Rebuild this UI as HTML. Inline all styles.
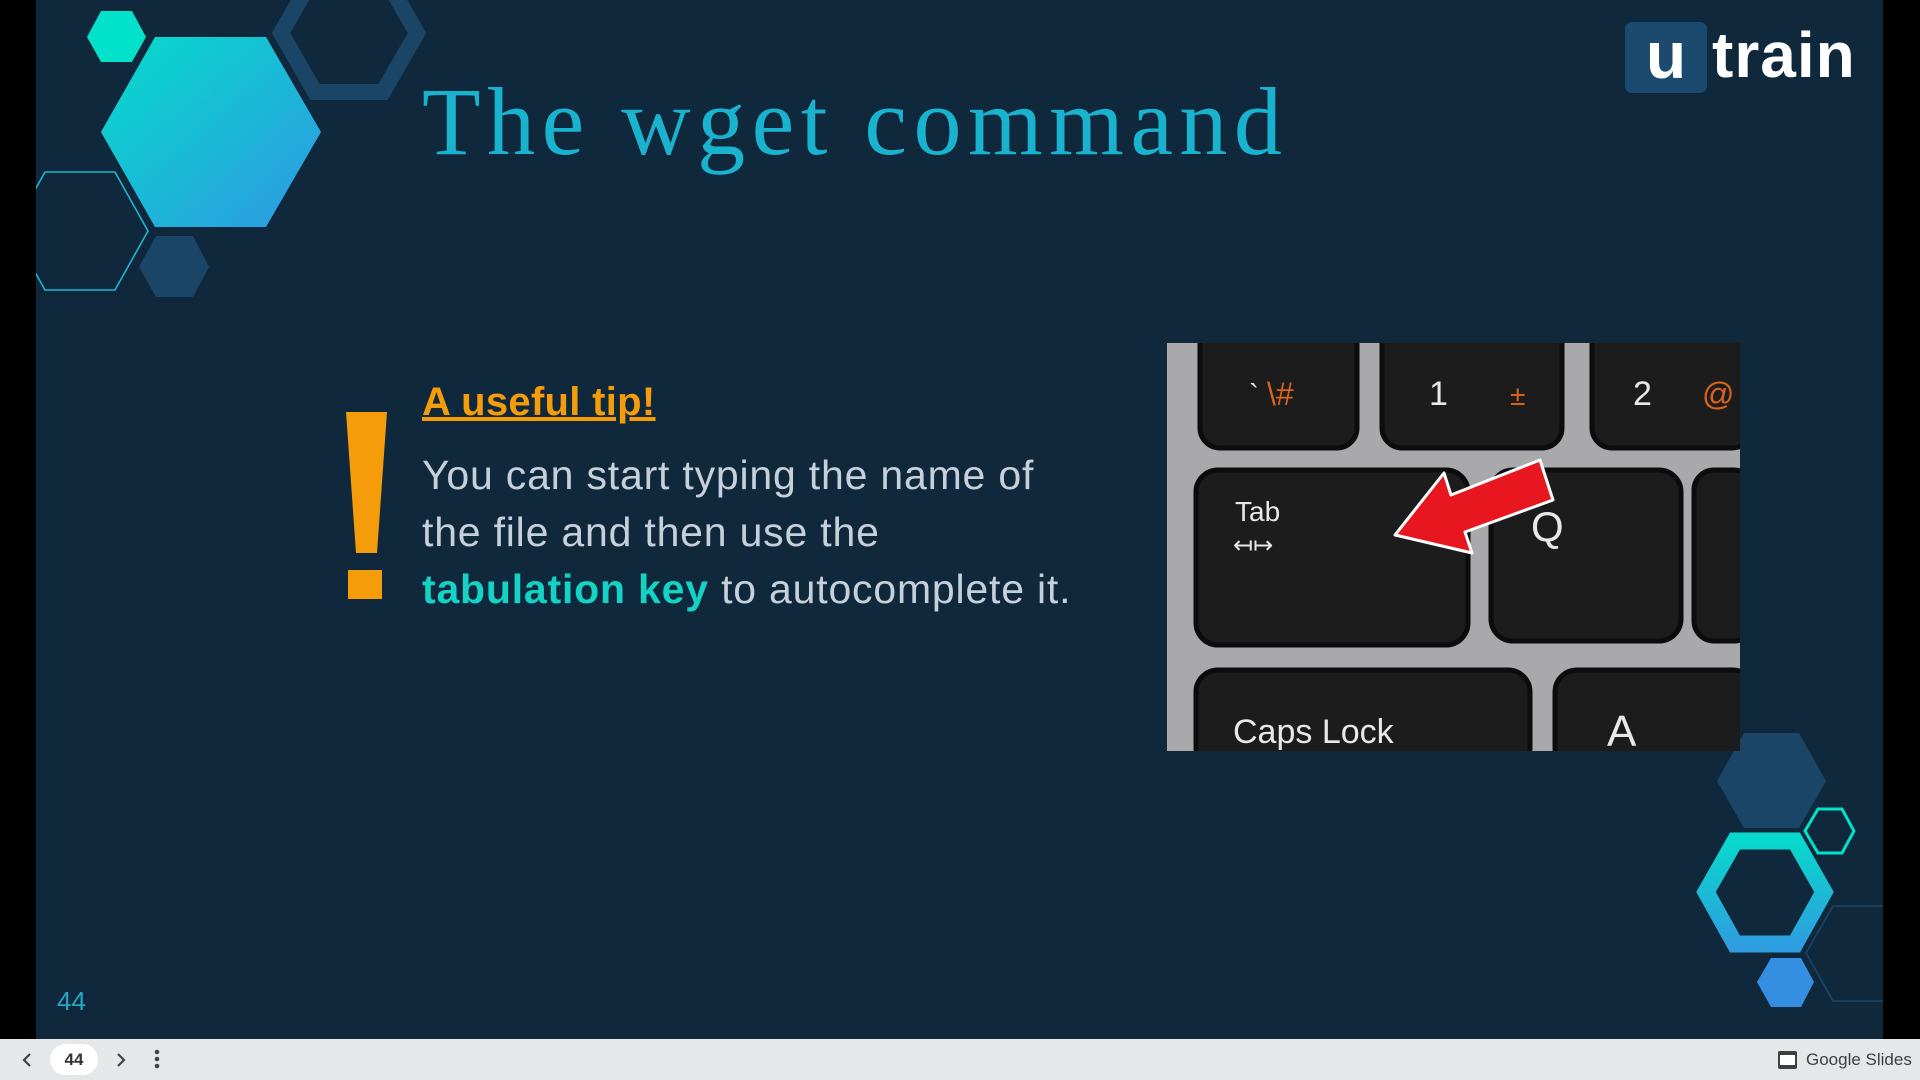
<!DOCTYPE html>
<html><head><meta charset="utf-8"><style>
html,body{margin:0;padding:0;width:1920px;height:1080px;overflow:hidden;background:#000;}
#bar{position:absolute;left:0;top:1039px;width:1920px;height:41px;background:#e6e7e9;font-family:"Liberation Sans",sans-serif;}
.abs{position:absolute;}
</style></head><body>
<svg class="abs" style="left:0;top:0" width="1920" height="1080">
<defs>
<linearGradient id="g1" x1="0" y1="0" x2="1" y2="1"><stop offset="0" stop-color="#05dccb"/><stop offset="1" stop-color="#2f98e2"/></linearGradient>
<linearGradient id="g2" x1="0" y1="0" x2="0" y2="1"><stop offset="0" stop-color="#08d8cc"/><stop offset="1" stop-color="#2e9ee0"/></linearGradient>
<clipPath id="sc"><rect x="36" y="0" width="1847" height="1039"/></clipPath>
</defs>
<rect x="36" y="0" width="1847" height="1039" fill="#0f283c"/>
<g clip-path="url(#sc)">
<polygon points="101,132 155,37 266,37 321,132 266,227 155,227" fill="url(#g1)"/>
<polygon points="87,37 101,11 132,11 146,37 132,62 101,62" fill="#02e1c9"/>
<polygon points="281,33 315,-26 383,-26 417,33 383,92 315,92" fill="none" stroke="#1b4567" stroke-width="16"/>
<polygon points="45,172 115,172 148,231 115,290 45,290 12,231" fill="none" stroke="#1fb5d4" stroke-width="1.6"/>
<polygon points="139,267 156,236 193,236 209,267 193,297 156,297" fill="#1b4567"/>
<polygon points="1717,781 1744,733 1799,733 1826,781 1799,828 1744,828" fill="#1b4567"/>
<polygon points="1805,831 1818,809 1842,809 1854,831 1842,853 1818,853" fill="none" stroke="#02e1c9" stroke-width="3"/>
<polygon points="1706,892 1735,841 1795,841 1824,892 1795,944 1735,944" fill="none" stroke="url(#g2)" stroke-width="17"/>
<polygon points="1757,982 1771,958 1801,958 1814,982 1801,1007 1771,1007" fill="#348fe2"/>
<polygon points="1806,953 1833,906 1900,906 1927,953 1900,1001 1833,1001" fill="none" stroke="#1b4567" stroke-width="1.6"/>
<polygon points="346,412 387,412 377,553 356,553" fill="#f59c0a"/>
<rect x="348" y="570" width="34" height="29" fill="#f59c0a"/>
<rect x="1625" y="22" width="82" height="71" rx="7" fill="#1b4a6e"/>
</g>
<svg x="1167" y="343" width="573" height="408" viewBox="0 0 573 408">
<rect width="573" height="408" fill="#a9a8aa"/>
<g fill="#1c1c1d" stroke="#0c0c0c" stroke-width="5">
<rect x="33" y="-20" width="157" height="125" rx="20"/>
<rect x="215" y="-20" width="180" height="125" rx="20"/>
<rect x="425" y="-20" width="160" height="125" rx="20"/>
<rect x="29" y="127" width="272" height="175" rx="22"/>
<rect x="324" y="127" width="190" height="171" rx="22"/>
<rect x="527" y="127" width="60" height="171" rx="20"/>
<rect x="29" y="327" width="334" height="100" rx="22"/>
<rect x="388" y="327" width="200" height="100" rx="22"/>
</g>
<g font-family="Liberation Sans,sans-serif" fill="#e8e8e8">
<text x="82" y="62" font-size="30">`</text>
<text x="100" y="62" font-size="32" fill="#d8641c">\#</text>
<text x="262" y="62" font-size="34">1</text>
<text x="343" y="62" font-size="28" fill="#d8641c">±</text>
<text x="466" y="62" font-size="34">2</text>
<text x="535" y="62" font-size="32" fill="#d8641c">@</text>
<text x="68" y="178" font-size="28">Tab</text>
<text x="66" y="210" font-size="24">↤↦</text>
<text x="364" y="198" font-size="42">Q</text>
<text x="66" y="400" font-size="34">Caps Lock</text>
<text x="440" y="403" font-size="44">A</text>
</g>
<polygon points="228,192 277,130 284,152 373,117 386,157 298,189 305,210" fill="#e8161f" stroke="#fff" stroke-width="3" stroke-linejoin="round"/>
</svg>
</svg>
<div class="abs" style="left:422px;top:74px;font-family:'Liberation Serif',serif;font-size:96px;color:#1ab3cf;letter-spacing:6.5px;line-height:1;white-space:nowrap;font-weight:normal">The wget command</div>
<div class="abs" style="left:1636px;top:22px;width:60px;text-align:center;font-family:'Liberation Sans',sans-serif;font-weight:bold;font-size:66px;color:#fff;line-height:1">u</div>
<div class="abs" style="left:1712px;top:23px;font-family:'Liberation Sans',sans-serif;font-weight:bold;font-size:64px;color:#fff;line-height:1;letter-spacing:1px">train</div>
<div class="abs" style="left:422px;top:382px;font-family:'Liberation Sans',sans-serif;font-weight:bold;font-size:40px;color:#f59c0a;text-decoration:underline;line-height:1;letter-spacing:0.3px">A useful tip!</div>
<div class="abs" style="left:422px;top:447px;font-family:'Liberation Sans',sans-serif;font-size:41px;letter-spacing:0.8px;color:#c5d0db;line-height:57px;white-space:nowrap">You can start typing the name of<br>the file and then use the<br><b style="color:#14d2c4">tabulation key</b> to autocomplete it.</div>
<div class="abs" style="left:57px;top:988px;font-family:'Liberation Sans',sans-serif;font-size:26px;color:#1fa8c8;line-height:1">44</div>
<div id="bar">
<svg class="abs" style="left:18px;top:12px" width="18" height="18"><path d="M12 3 L6 9 L12 15" fill="none" stroke="#444" stroke-width="2.2"/></svg>
<div class="abs" style="left:50px;top:5px;width:48px;height:31px;border-radius:16px;background:#fff;text-align:center;line-height:31px;font-weight:bold;font-size:17px;color:#333">44</div>
<svg class="abs" style="left:112px;top:12px" width="18" height="18"><path d="M6 3 L12 9 L6 15" fill="none" stroke="#444" stroke-width="2.2"/></svg>
<svg class="abs" style="left:152px;top:10px" width="10" height="22"><circle cx="5" cy="3" r="2.3" fill="#444"/><circle cx="5" cy="10" r="2.3" fill="#444"/><circle cx="5" cy="17" r="2.3" fill="#444"/></svg>
<svg class="abs" style="left:1777px;top:11px" width="21" height="20"><rect x="1" y="1" width="19" height="18" rx="2" fill="#3c4043"/><rect x="3" y="5" width="15" height="10" fill="#fff"/></svg>
<div class="abs" style="left:1806px;top:11px;font-size:17px;color:#3c4043">Google Slides</div>
</div>
</body></html>
